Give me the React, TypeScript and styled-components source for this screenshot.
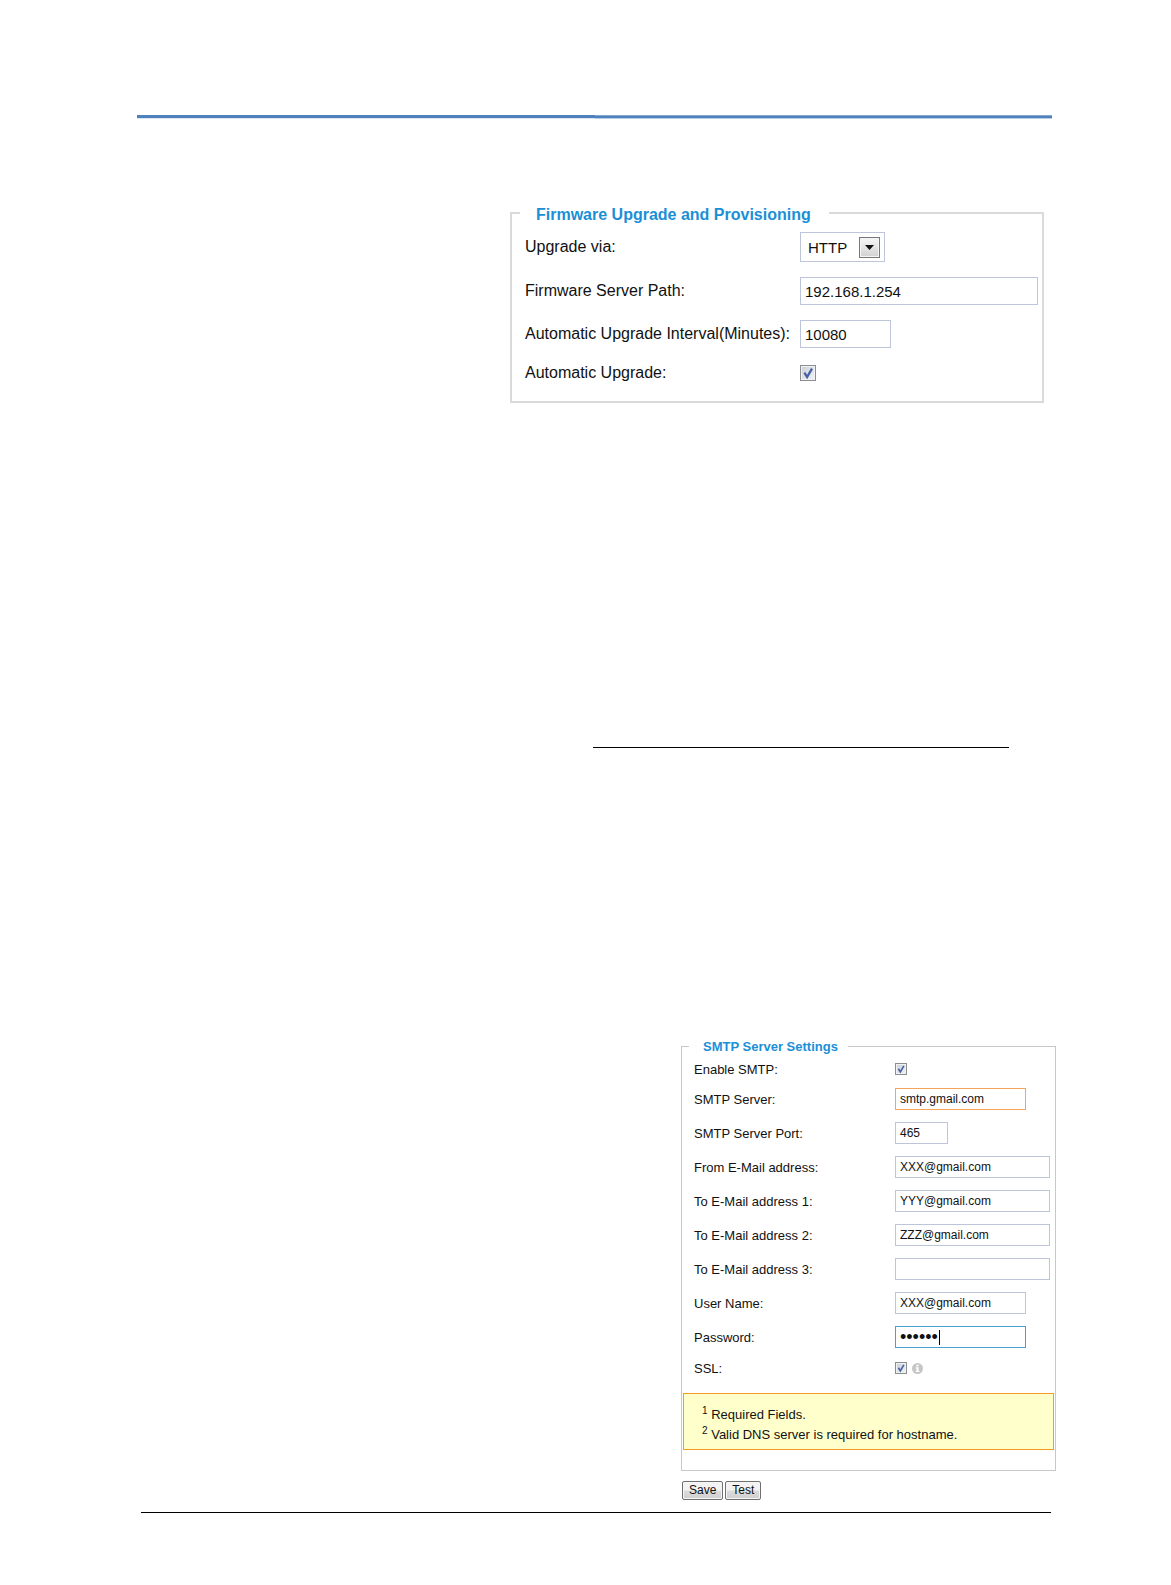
import React, { useId } from "react";
import styled, { createGlobalStyle } from "styled-components";

const GlobalStyle = createGlobalStyle`
  *, *::before, *::after { box-sizing: border-box; }
  body {
    margin: 0;
    background: #fff;
    color: #111;
    font-family: "Liberation Sans", Arial, Helvetica, sans-serif;
  }
`;

const Page = styled.main`
  display: flex;
  flex-direction: column;
  padding: 115px 119px 72px 137px;
`;

const HeaderRule = styled.div`
  display: flex;
  height: 4px;
  margin-bottom: 82px;
`;

const HeaderRuleHalf = styled.span<{ $soft?: boolean }>`
  flex: 1;
  background: ${(p) =>
    p.$soft
      ? "linear-gradient(#84a7d1 0 1px, #4f81bd 1px 3px, #b9cde5 3px 4px)"
      : "linear-gradient(#4f81bd 0 3px, #dce6f2 3px 4px)"};
`;

const LinkRule = styled.hr`
  align-self: flex-end;
  width: 416px;
  max-width: 100%;
  height: 1px;
  margin: 344px 43px 288px 0;
  border: 0;
  background: #000;
`;

const FooterRule = styled.hr`
  align-self: stretch;
  height: 1px;
  margin: 12px 1px 0 4px;
  border: 0;
  background: #000;
`;

const FirmwareForm = styled.form`
  align-self: flex-end;
  width: 534px;
  max-width: 100%;
  margin-right: 8px;
  font-size: 16px;
`;

const SmtpForm = styled.form`
  align-self: flex-end;
  width: 375px;
  max-width: 100%;
  margin-right: -4px;
  font-size: 13px;
`;

const Panel = styled.fieldset<{ $border: string; $pad: string }>`
  min-width: 0;
  margin: 0;
  padding: ${(p) => p.$pad};
  border: ${(p) => p.$border};
`;

const Legend = styled.legend<{ $size: number; $line: number; $pad: string }>`
  padding: ${(p) => p.$pad};
  color: #1b8fd6;
  font-size: ${(p) => p.$size}px;
  font-weight: bold;
  line-height: ${(p) => p.$line}px;
`;

const Row = styled.div<{ $labelWidth: number; $height: number }>`
  display: grid;
  grid-template-columns: ${(p) => p.$labelWidth}px minmax(0, 1fr);
  align-items: center;
  height: ${(p) => p.$height}px;
  white-space: nowrap;
`;

const Controls = styled.div`
  display: flex;
  align-items: center;
  gap: 5px;
`;

const TextInput = styled.input<{
  $width: number;
  $height: number;
  $size: number;
  $tone?: string;
}>`
  width: ${(p) => p.$width}px;
  max-width: 100%;
  height: ${(p) => p.$height}px;
  padding: 0 4px;
  border: 1px solid ${(p) => p.$tone ?? "#bcc5d9"};
  border-radius: 0;
  outline: 0;
  background: #fff;
  color: #111;
  font-family: inherit;
  font-size: ${(p) => p.$size}px;
`;

const Stack = styled.span`
  display: inline-grid;
  align-items: center;
  > * { grid-area: 1 / 1; }
`;

const Select = styled.select`
  width: 85px;
  height: 30px;
  padding: 0 7px;
  appearance: none;
  border: 1px solid #bcc5d9;
  border-radius: 0;
  background: #fff;
  color: #111;
  font-family: inherit;
  font-size: 15px;
`;

const SelectArrow = styled.span`
  display: grid;
  place-items: center;
  justify-self: end;
  width: 21px;
  height: 21px;
  margin-right: 5px;
  border: 1px solid #777;
  background: linear-gradient(#f6f6f6, #d2d2d2);
  box-shadow: inset 0 0 0 1px #f4f4f4;
  pointer-events: none;
`;

const Box = styled.input<{ $size: number }>`
  width: ${(p) => p.$size}px;
  height: ${(p) => p.$size}px;
  margin: 0;
  appearance: none;
  border: 1px solid #8b8d8e;
  background: linear-gradient(135deg, #c9ced6, #f3f4f6);
  box-shadow: inset 0 0 0 1px #f2f2f2;
`;

const Tick = styled.svg`
  justify-self: center;
  pointer-events: none;
`;

const Caret = styled.span`
  width: 1px;
  height: 15px;
  margin-left: 44px;
  background: #000;
  pointer-events: none;
`;

const Notice = styled.div`
  height: 57px;
  margin: 11px 1px 20px;
  padding: 11px 18px 0;
  border: 1px solid #f39c1f;
  background: #ffffcc;
  line-height: 20px;
`;

const NoteLine = styled.p`
  height: 20px;
  margin: 0;
`;

const NoteMark = styled.sup`
  font-size: 10px;
  line-height: 0;
`;

const Actions = styled.div`
  display: flex;
  gap: 2px;
  padding: 10px 1px 0;
`;

const ActionButton = styled.button`
  height: 19px;
  padding: 0 6px;
  border: 1px solid #707070;
  border-radius: 2px;
  background: linear-gradient(#f3f3f3 0 48%, #dcdcdc 52%, #cfcfcf);
  box-shadow: inset 0 0 0 1px #f5f5f5;
  color: #111;
  font-family: inherit;
  font-size: 12px;
  line-height: 17px;
`;

function CheckBox({ id, size }: { id: string; size: number }) {
  return (
    <Stack>
      <Box id={id} type="checkbox" defaultChecked $size={size} />
      <Tick width={size - 2} height={size - 2} viewBox="0 0 14 14" aria-hidden="true">
        <path d="M3.4 6.6 6.1 11 11 2.6" fill="none" stroke="#4861a5" strokeWidth="2.3" />
      </Tick>
    </Stack>
  );
}

function InfoIcon() {
  return (
    <svg width="11" height="11" viewBox="0 0 11 11" role="img" aria-label="SSL information">
      <circle cx="5.5" cy="5.5" r="5.5" fill="#c6c6c6" />
      <path d="M4.5 1.8h2v1.6h-2zM3.7 4.3h2.8v3.5h.9v1.1H3.7V7.8h.9V5.4h-.9z" fill="#fff" />
    </svg>
  );
}

interface FieldProps {
  label: string;
  height?: number;
  children: (id: string) => React.ReactNode;
}

function FirmwareField({ label, height = 44, children }: FieldProps) {
  const id = useId();
  return (
    <Row $labelWidth={275} $height={height}>
      <label htmlFor={id}>{label}</label>
      <Controls>{children(id)}</Controls>
    </Row>
  );
}

function SmtpField({ label, height = 34, children }: FieldProps) {
  const id = useId();
  return (
    <Row $labelWidth={201} $height={height}>
      <label htmlFor={id}>{label}</label>
      <Controls>{children(id)}</Controls>
    </Row>
  );
}

const Fields = styled.div`
  padding: 0 4px 0 12px;
`;

const mailFields = [
  { label: "SMTP Server:", value: "smtp.gmail.com", width: 131, tone: "#f5a55a" },
  { label: "SMTP Server Port:", value: "465", width: 53 },
  { label: "From E-Mail address:", value: "XXX@gmail.com", width: 155 },
  { label: "To E-Mail address 1:", value: "YYY@gmail.com", width: 155 },
  { label: "To E-Mail address 2:", value: "ZZZ@gmail.com", width: 155 },
  { label: "To E-Mail address 3:", value: "", width: 155 },
  { label: "User Name:", value: "XXX@gmail.com", width: 131 },
];

export default function App() {
  return (
    <>
      <GlobalStyle />
      <Page>
        <HeaderRule>
          <HeaderRuleHalf />
          <HeaderRuleHalf $soft />
        </HeaderRule>

        <FirmwareForm>
          <Panel $border="2px solid #dadada" $pad="0 4px 10px 8px">
            <Legend $size={16} $line={20} $pad="4px 18px 0 16px">
              Firmware Upgrade and Provisioning
            </Legend>
            <FirmwareFields>
              <FirmwareField label="Upgrade via:">
                {(id) => (
                  <Stack>
                    <Select id={id} defaultValue="HTTP">
                      <option>HTTP</option>
                      <option>TFTP</option>
                    </Select>
                    <SelectArrow>
                      <svg width="9" height="5" viewBox="0 0 9 5" aria-hidden="true">
                        <path d="M0 0h9L4.5 5z" fill="#111" />
                      </svg>
                    </SelectArrow>
                  </Stack>
                )}
              </FirmwareField>
              <FirmwareField label="Firmware Server Path:">
                {(id) => (
                  <TextInput id={id} defaultValue="192.168.1.254" $width={238} $height={28} $size={15} />
                )}
              </FirmwareField>
              <FirmwareField label="Automatic Upgrade Interval(Minutes):" height={42}>
                {(id) => <TextInput id={id} defaultValue="10080" $width={91} $height={28} $size={15} />}
              </FirmwareField>
              <FirmwareField label="Automatic Upgrade:" height={36}>
                {(id) => <CheckBox id={id} size={16} />}
              </FirmwareField>
            </FirmwareFields>
          </Panel>
        </FirmwareForm>

        <LinkRule />

        <SmtpForm>
          <Panel $border="1px solid #c8c8c8" $pad="0">
            <SmtpLegend $size={13} $line={18} $pad="2px 10px 0 14px">
              SMTP Server Settings
            </SmtpLegend>
            <Fields>
              <SmtpField label="Enable SMTP:" height={26}>
                {(id) => <CheckBox id={id} size={12} />}
              </SmtpField>
              {mailFields.map((f) => (
                <SmtpField key={f.label} label={f.label}>
                  {(id) => (
                    <TextInput
                      id={id}
                      defaultValue={f.value}
                      $width={f.width}
                      $height={22}
                      $size={12}
                      $tone={f.tone}
                    />
                  )}
                </SmtpField>
              ))}
              <SmtpField label="Password:">
                {(id) => (
                  <Stack>
                    <TextInput
                      id={id}
                      type="password"
                      defaultValue="secret"
                      $width={131}
                      $height={22}
                      $size={18}
                      $tone="#4a9fd0"
                    />
                    <Caret />
                  </Stack>
                )}
              </SmtpField>
              <SmtpField label="SSL:" height={28}>
                {(id) => (
                  <>
                    <CheckBox id={id} size={12} />
                    <InfoIcon />
                  </>
                )}
              </SmtpField>
            </Fields>
            <Notice>
              <NoteLine>
                <NoteMark>1</NoteMark> Required Fields.
              </NoteLine>
              <NoteLine>
                <NoteMark>2</NoteMark> Valid DNS server is required for hostname.
              </NoteLine>
            </Notice>
          </Panel>
          <Actions>
            <ActionButton type="button">Save</ActionButton>
            <ActionButton type="button">Test</ActionButton>
          </Actions>
        </SmtpForm>

        <FooterRule />
      </Page>
    </>
  );
}

const FirmwareFields = styled.div`
  padding-left: 5px;
`;

const SmtpLegend = styled(Legend)`
  margin-left: 7px;
`;
